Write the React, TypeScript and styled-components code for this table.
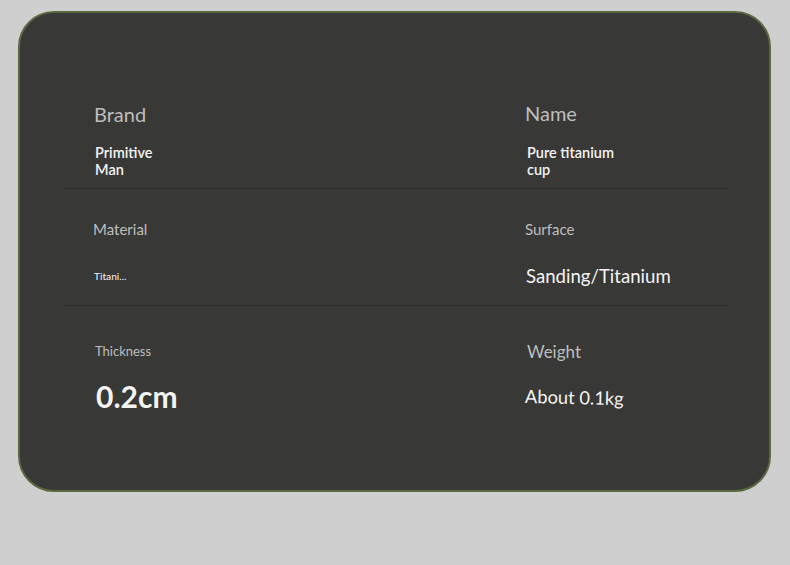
import React from "react";
import styled, { createGlobalStyle } from "styled-components";

const Global = createGlobalStyle`
  html, body { margin: 0; padding: 0; background: #cfcfcf; }
  body { font-family: Lato, "Noto Sans", sans-serif; }
  * { box-sizing: border-box; }
`;

const Page = styled.div`
  padding: 11px 19px 0 18px;
  width: 790px;
  height: 565px;
`;

const Card = styled.section`
  width: 753px;
  height: 481px;
  background: #383836;
  border: 2px solid #58683f;
  border-radius: 36px;
  padding: 89px 41px 0 44px;
  display: flex;
  flex-direction: column;
`;

const Row = styled.div<{ $h: number; $pt: number; $divider?: boolean }>`
  display: grid;
  grid-template-columns: 431px 1fr;
  height: ${(p) => p.$h}px;
  padding: ${(p) => p.$pt}px 0 0 30px;
  border-bottom: ${(p) => (p.$divider ? "1px solid #2c2c2a" : "none")};
`;

const Cell = styled.div<{ $gap: number; $dx?: number; $dy?: number }>`
  display: flex;
  flex-direction: column;
  align-items: flex-start;
  gap: ${(p) => p.$gap}px;
  margin-left: ${(p) => p.$dx ?? 0}px;
  margin-top: ${(p) => p.$dy ?? 0}px;
`;

const Label = styled.div<{ $size: number }>`
  color: #bebebe;
  font-size: ${(p) => p.$size}px;
  line-height: 1.2;
`;

const Value = styled.div<{ $size: number; $weight?: number; $max?: number; $lh?: number }>`
  color: #f4f4f4;
  font-size: ${(p) => p.$size}px;
  font-weight: ${(p) => p.$weight ?? 400};
  line-height: ${(p) => (p.$lh ? `${p.$lh}px` : 1.2)};
  max-width: ${(p) => (p.$max ? `${p.$max}px` : "none")};
`;

const Tilted = styled(Value)`
  transform: rotate(1.3deg);
  transform-origin: left center;
`;

export default function App() {
  return (
    <>
      <Global />
      <Page>
        <Card>
          <Row $h={87} $pt={0} $divider>
            <Cell $gap={18}>
              <Label $size={20}>Brand</Label>
              <Value $size={14.5} $weight={600} $lh={17} $max={80} style={{ marginLeft: 1 }}>
                Primitive Man
              </Value>
            </Cell>
            <Cell $gap={19} $dy={-1}>
              <Label $size={20}>Name</Label>
              <Value $size={14.5} $weight={600} $lh={17} $max={104} style={{ marginLeft: 2 }}>
                Pure titanium cup
              </Value>
            </Cell>
          </Row>
          <Row $h={117} $pt={31} $divider>
            <Cell $gap={32} $dx={-1}>
              <Label $size={15}>Material</Label>
              <Value $size={10.2} style={{ marginLeft: 1 }}>Titani...</Value>
            </Cell>
            <Cell $gap={27}>
              <Label $size={15}>Surface</Label>
              <Value $size={18.6} style={{ marginLeft: 1 }}>Sanding/Titanium</Value>
            </Cell>
          </Row>
          <Row $h={140} $pt={38}>
            <Cell $gap={18} $dx={1}>
              <Label $size={13}>Thickness</Label>
              <Value $size={30} $weight={700} style={{ marginLeft: 1 }}>0.2cm</Value>
            </Cell>
            <Cell $gap={24} $dy={-2}>
              <Label $size={17} style={{ marginLeft: 2 }}>Weight</Label>
              <Tilted $size={18.3}>About 0.1kg</Tilted>
            </Cell>
          </Row>
        </Card>
      </Page>
    </>
  );
}
